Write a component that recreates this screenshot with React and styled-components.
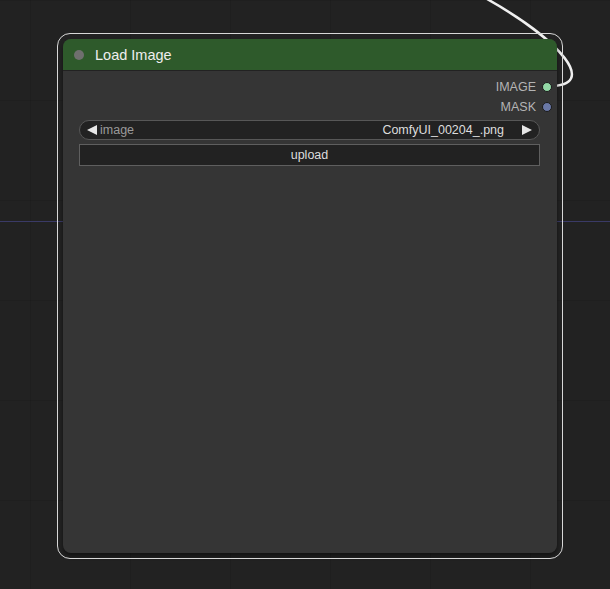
import React from "react";
import styled, { createGlobalStyle } from "styled-components";

const Global = createGlobalStyle`
	html, body {
		margin: 0;
		padding: 0;
		background: #222222;
		font-family: "Liberation Sans", Arial, sans-serif;
	}
`;

const Canvas = styled.div`
	position: relative;
	width: 610px;
	height: 589px;
	overflow: hidden;
	background-color: #222222;
	background-image:
		linear-gradient(to right, rgba(0, 0, 0, 0.1) 1px, transparent 1px),
		linear-gradient(to bottom, rgba(0, 0, 0, 0.1) 1px, transparent 1px);
	background-size: 100px 100px;
	background-position: 30px 0;
`;

const Links = styled.svg`
	position: absolute;
	inset: 0;
	width: 610px;
	height: 589px;
`;

const Node = styled.div`
	position: absolute;
	left: 63px;
	top: 39px;
	width: 494px;
	height: 514px;
	background: #353535;
	border-radius: 8px;
	box-shadow: 0 3px 4px rgba(0, 0, 0, 0.45);
	display: flex;
	flex-direction: column;
`;

const Selection = styled.div`
	position: absolute;
	left: -6px;
	top: -6px;
	right: -6px;
	bottom: -6px;
	border: 1.5px solid #d8d8d8;
	border-radius: 13px;
	pointer-events: none;
`;

const TitleBar = styled.div`
	height: 31px;
	background: #2e5a2b;
	border-radius: 8px 8px 0 0;
	display: flex;
	align-items: center;
	padding-left: 11px;
	gap: 11px;
	box-shadow: 0 1px 0 rgba(0, 0, 0, 0.35);
`;

const TitleDot = styled.span`
	width: 10px;
	height: 10px;
	border-radius: 50%;
	background: #6f6f6f;
`;

const Title = styled.span`
	color: #eeeeee;
	font-size: 14.5px;
`;

const Outputs = styled.div`
	display: flex;
	flex-direction: column;
	align-items: flex-end;
	padding: 10px 5px 0 0;
	gap: 6px;
`;

const OutputRow = styled.div`
	display: flex;
	align-items: center;
	gap: 6px;
	height: 14px;
	color: #b4b4b4;
	font-size: 12.5px;
`;

const Slot = styled.span`
	width: 8px;
	height: 8px;
	border-radius: 50%;
	background: ${(p) => p.$color};
	border: 1.5px solid #1a1a1a;
`;

const Widgets = styled.div`
	display: flex;
	flex-direction: column;
	gap: 4px;
	padding: 6px 17px 0 16px;
`;

const Combo = styled.div`
	height: 18px;
	border: 1px solid #575757;
	border-radius: 10px;
	background: #222222;
	display: flex;
	align-items: center;
	padding: 0 7px 0 7px;
	font-size: 12.5px;
`;

const ComboLabel = styled.span`
	color: #9a9a9a;
	margin-left: 3px;
	flex: 1;
`;

const ComboValue = styled.span`
	color: #dddddd;
	margin-right: 18px;
`;

const Arrow = styled.svg`
	width: 10px;
	height: 10px;
	flex: none;
`;

const Button = styled.div`
	height: 20px;
	border: 1px solid #5f5f5f;
	background: #222222;
	color: #dddddd;
	font-size: 12.5px;
	display: flex;
	align-items: center;
	justify-content: center;
`;

export default function App() {
	return (
		<Canvas>
			<Global />
			<Links viewBox="0 0 610 589">
				<line x1="0" y1="221.5" x2="610" y2="221.5" stroke="#3a3a66" strokeWidth="1" />
				<path
					d="M 549 86 C 600 86, 560 40, 487 -1"
					fill="none"
					stroke="#f0f0f0"
					strokeWidth="2.5"
				/>
			</Links>
			<Node>
				<Selection />
				<TitleBar>
					<TitleDot />
					<Title>Load Image</Title>
				</TitleBar>
				<Outputs>
					<OutputRow>
						IMAGE
						<Slot $color="#93d9a6" />
					</OutputRow>
					<OutputRow>
						MASK
						<Slot $color="#6a78a6" />
					</OutputRow>
				</Outputs>
				<Widgets>
					<Combo>
						<Arrow viewBox="0 0 10 10">
							<polygon points="0,5 10,0 10,10" fill="#e6e6e6" />
						</Arrow>
						<ComboLabel>image</ComboLabel>
						<ComboValue>ComfyUI_00204_.png</ComboValue>
						<Arrow viewBox="0 0 10 10">
							<polygon points="10,5 0,0 0,10" fill="#e6e6e6" />
						</Arrow>
					</Combo>
					<Button>upload</Button>
				</Widgets>
			</Node>
		</Canvas>
	);
}
